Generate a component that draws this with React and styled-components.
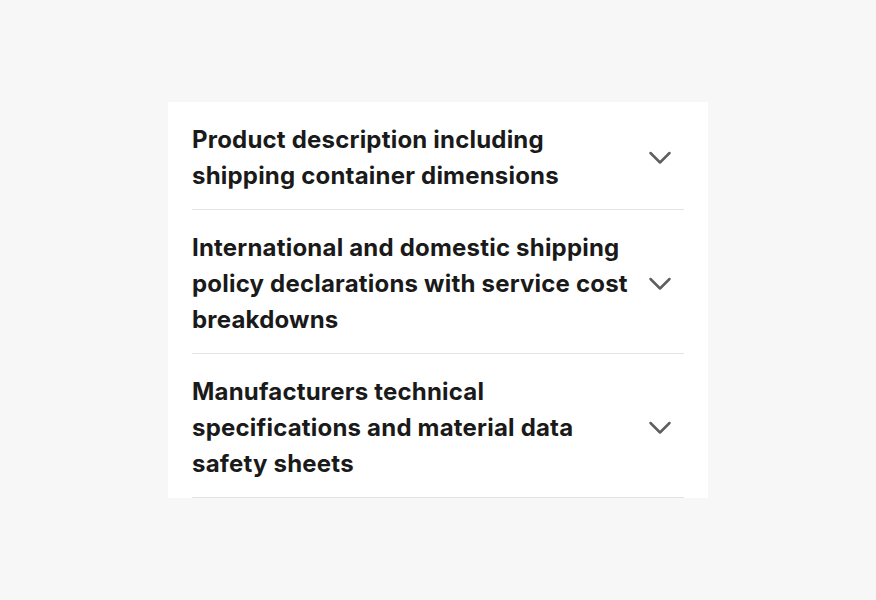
import React from "react";
import styled, { createGlobalStyle } from "styled-components";

const GlobalStyle = createGlobalStyle`
  html, body {
    margin: 0;
    padding: 0;
    background: #f7f7f7;
  }
  #root {
    min-height: 100vh;
    display: flex;
    align-items: center;
    justify-content: center;
  }
`;

const items = [
  "Product description including shipping container dimensions",
  "International and domestic shipping policy declarations with service cost breakdowns",
  "Manufacturers technical specifications and material data safety sheets",
];

const Chevron = () => (
  <svg width="24" height="24" viewBox="0 0 24 24" fill="none">
    <path
      d="M2.5 7l9.5 9.5 9.5-9.5"
      stroke="#5f5f5f"
      strokeWidth="2.5"
      strokeLinecap="round"
      strokeLinejoin="round"
    />
  </svg>
);

export default function App() {
  return (
    <>
      <GlobalStyle />
      <Card>
        {items.map((title) => (
          <Item key={title}>
            <Header type="button">
              <Title>{title}</Title>
              <IconWrap>
                <Chevron />
              </IconWrap>
            </Header>
          </Item>
        ))}
      </Card>
    </>
  );
}

const Card = styled.div`
  width: 540px;
  box-sizing: border-box;
  background: #ffffff;
  padding: 0 24px;
`;

const Item = styled.div`
  border-bottom: 1px solid #e3e3e3;
`;

const Header = styled.button`
  width: 100%;
  display: flex;
  align-items: center;
  justify-content: space-between;
  gap: 12px;
  padding: 20px 12px 15px 0;
  margin: 0;
  border: 0;
  background: transparent;
  text-align: left;
  cursor: pointer;
  font: inherit;
`;

const Title = styled.span`
  flex: 1;
  font-family: Inter, "Liberation Sans", sans-serif;
  font-size: 24px;
  font-weight: 700;
  line-height: 36px;
  letter-spacing: 0.2px;
  color: #1a1a1a;
`;

const IconWrap = styled.span`
  display: flex;
  width: 24px;
  height: 24px;
  flex-shrink: 0;
`;
